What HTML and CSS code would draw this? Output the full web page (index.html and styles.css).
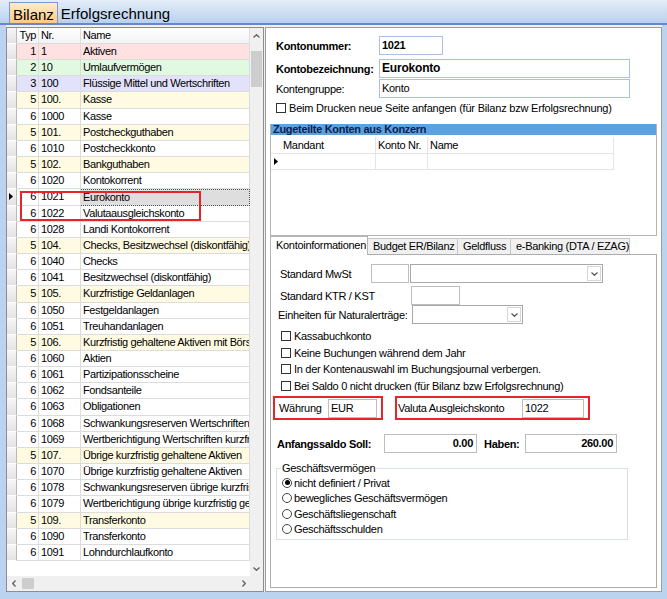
FILE: index.html
```html
<!DOCTYPE html>
<html lang="de">
<head>
	<meta charset="UTF-8">
	<title>Kontenplan</title>
	<link rel="stylesheet" href="styles.css">
</head>
<body>
	<div class="topbar">
		<div class="ttab on">Bilanz</div>
		<div class="ttab">Erfolgsrechnung</div>
	</div>
	<div class="main">
		<div class="list">
			<div class="list-body">
				<div class="grid">
					<div class="row ghead"><span class="rh"></span><span class="typ">Typ</span><span class="nr">Nr.</span><span class="name">Name</span></div>
					<div class="row t1"><span class="rh"></span><span class="typ">1</span><span class="nr">1</span><span class="name">Aktiven</span></div>
					<div class="row t2"><span class="rh"></span><span class="typ">2</span><span class="nr">10</span><span class="name">Umlaufvermögen</span></div>
					<div class="row t3"><span class="rh"></span><span class="typ">3</span><span class="nr">100</span><span class="name">Flüssige Mittel und Wertschriften</span></div>
					<div class="row t5"><span class="rh"></span><span class="typ">5</span><span class="nr">100.</span><span class="name">Kasse</span></div>
					<div class="row"><span class="rh"></span><span class="typ">6</span><span class="nr">1000</span><span class="name">Kasse</span></div>
					<div class="row t5"><span class="rh"></span><span class="typ">5</span><span class="nr">101.</span><span class="name">Postcheckguthaben</span></div>
					<div class="row"><span class="rh"></span><span class="typ">6</span><span class="nr">1010</span><span class="name">Postcheckkonto</span></div>
					<div class="row t5"><span class="rh"></span><span class="typ">5</span><span class="nr">102.</span><span class="name">Bankguthaben</span></div>
					<div class="row"><span class="rh"></span><span class="typ">6</span><span class="nr">1020</span><span class="name">Kontokorrent</span></div>
					<div class="row sel"><span class="rh"><svg width="4" height="7" viewBox="0 0 4 7"><path d="M0 0L4 3.5L0 7Z" fill="#000"/></svg></span><span class="typ">6</span><span class="nr">1021</span><span class="name">Eurokonto</span></div>
					<div class="row"><span class="rh"></span><span class="typ">6</span><span class="nr">1022</span><span class="name">Valutaausgleichskonto</span></div>
					<div class="row"><span class="rh"></span><span class="typ">6</span><span class="nr">1028</span><span class="name">Landi Kontokorrent</span></div>
					<div class="row t5"><span class="rh"></span><span class="typ">5</span><span class="nr">104.</span><span class="name">Checks, Besitzwechsel (diskontfähig)</span></div>
					<div class="row"><span class="rh"></span><span class="typ">6</span><span class="nr">1040</span><span class="name">Checks</span></div>
					<div class="row"><span class="rh"></span><span class="typ">6</span><span class="nr">1041</span><span class="name">Besitzwechsel (diskontfähig)</span></div>
					<div class="row t5"><span class="rh"></span><span class="typ">5</span><span class="nr">105.</span><span class="name">Kurzfristige Geldanlagen</span></div>
					<div class="row"><span class="rh"></span><span class="typ">6</span><span class="nr">1050</span><span class="name">Festgeldanlagen</span></div>
					<div class="row"><span class="rh"></span><span class="typ">6</span><span class="nr">1051</span><span class="name">Treuhandanlagen</span></div>
					<div class="row t5"><span class="rh"></span><span class="typ">5</span><span class="nr">106.</span><span class="name">Kurzfristig gehaltene Aktiven mit Börsenkurs</span></div>
					<div class="row"><span class="rh"></span><span class="typ">6</span><span class="nr">1060</span><span class="name">Aktien</span></div>
					<div class="row"><span class="rh"></span><span class="typ">6</span><span class="nr">1061</span><span class="name">Partizipationsscheine</span></div>
					<div class="row"><span class="rh"></span><span class="typ">6</span><span class="nr">1062</span><span class="name">Fondsanteile</span></div>
					<div class="row"><span class="rh"></span><span class="typ">6</span><span class="nr">1063</span><span class="name">Obligationen</span></div>
					<div class="row"><span class="rh"></span><span class="typ">6</span><span class="nr">1068</span><span class="name">Schwankungsreserven Wertschriften</span></div>
					<div class="row"><span class="rh"></span><span class="typ">6</span><span class="nr">1069</span><span class="name">Wertberichtigung Wertschriften kurzfristig</span></div>
					<div class="row t5"><span class="rh"></span><span class="typ">5</span><span class="nr">107.</span><span class="name">Übrige kurzfristig gehaltene Aktiven</span></div>
					<div class="row"><span class="rh"></span><span class="typ">6</span><span class="nr">1070</span><span class="name">Übrige kurzfristig gehaltene Aktiven</span></div>
					<div class="row"><span class="rh"></span><span class="typ">6</span><span class="nr">1078</span><span class="name">Schwankungsreserven übrige kurzfristig</span></div>
					<div class="row"><span class="rh"></span><span class="typ">6</span><span class="nr">1079</span><span class="name">Wertberichtigung übrige kurzfristig gehaltene</span></div>
					<div class="row t5"><span class="rh"></span><span class="typ">5</span><span class="nr">109.</span><span class="name">Transferkonto</span></div>
					<div class="row"><span class="rh"></span><span class="typ">6</span><span class="nr">1090</span><span class="name">Transferkonto</span></div>
					<div class="row"><span class="rh"></span><span class="typ">6</span><span class="nr">1091</span><span class="name">Lohndurchlaufkonto</span></div>
				</div>
				<div class="vscroll">
					<div class="arr"><svg width="7" height="4" viewBox="0 0 7 4"><path d="M0.5 3.5L3.5 0.7L6.5 3.5" fill="none" stroke="#606060" stroke-width="1.3"/></svg></div>
					<div class="vthumb"></div>
					<div class="fill"></div>
					<div class="arr"><svg width="7" height="4" viewBox="0 0 7 4"><path d="M0.5 0.5L3.5 3.3L6.5 0.5" fill="none" stroke="#606060" stroke-width="1.3"/></svg></div>
				</div>
			</div>
			<div class="hscroll">
				<div class="harr"><svg width="4" height="7" viewBox="0 0 4 7"><path d="M3.5 0.5L0.7 3.5L3.5 6.5" fill="none" stroke="#606060" stroke-width="1.3"/></svg></div>
				<div class="hthumb"></div>
				<div class="fill"></div>
				<div class="harr"><svg width="4" height="7" viewBox="0 0 4 7"><path d="M0.5 0.5L3.3 3.5L0.5 6.5" fill="none" stroke="#606060" stroke-width="1.3"/></svg></div>
				<div class="corner"></div>
			</div>
			<div class="mark"></div>
		</div>

		<div class="detail">
			<div class="acct">
				<div class="frow">
					<label class="lbl b">Kontonummer:</label>
					<div class="field blue b w64">1021</div>
				</div>
				<div class="frow r2">
					<label class="lbl b">Kontobezeichnung:</label>
					<div class="field blue b big w251">Eurokonto</div>
				</div>
				<div class="frow r3">
					<label class="lbl">Kontengruppe:</label>
					<div class="field blue w251">Konto</div>
				</div>
				<div class="crow top">
					<span class="chk"></span>Beim Drucken neue Seite anfangen (für Bilanz bzw Erfolgsrechnung)
				</div>
			</div>

			<div class="konzern">
				<div class="kbar">Zugeteilte Konten aus Konzern</div>
				<div class="krow khead"><span class="krh"></span><span class="k1">Mandant</span><span class="k2">Konto Nr.</span><span class="k3">Name</span></div>
				<div class="krow"><span class="krh"><svg width="4" height="7" viewBox="0 0 4 7"><path d="M0 0L4 3.5L0 7Z" fill="#000"/></svg></span><span class="k1"></span><span class="k2"></span><span class="k3"></span></div>
			</div>

			<div class="tabs">
				<div class="tab on">Kontoinformationen</div>
				<div class="tab t2">Budget ER/Bilanz</div>
				<div class="tab t3">Geldfluss</div>
				<div class="tab t4">e-Banking (DTA / EZAG)</div>
			</div>

			<div class="pane">
				<div class="prow">
					<label class="plbl">Standard MwSt</label>
					<div class="field w38"></div>
					<div class="field select w193"><span class="drop"><svg width="7" height="4" viewBox="0 0 7 4"><path d="M0.5 0.5L3.5 3.3L6.5 0.5" fill="none" stroke="#555" stroke-width="1.2"/></svg></span></div>
				</div>
				<div class="prow ktr">
					<label class="plbl wide">Standard KTR / KST</label>
					<div class="field w49"></div>
				</div>
				<div class="prow">
					<label class="plbl wide einh">Einheiten für Naturalerträge:</label>
					<div class="field select w111"><span class="drop"><svg width="7" height="4" viewBox="0 0 7 4"><path d="M0.5 0.5L3.5 3.3L6.5 0.5" fill="none" stroke="#555" stroke-width="1.2"/></svg></span></div>
				</div>
				<div class="checks">
					<div class="crow"><span class="chk"></span>Kassabuchkonto</div>
					<div class="crow"><span class="chk"></span>Keine Buchungen während dem Jahr</div>
					<div class="crow"><span class="chk"></span>In der Kontenauswahl im Buchungsjournal verbergen.</div>
					<div class="crow"><span class="chk"></span>Bei Saldo 0 nicht drucken (für Bilanz bzw Erfolgsrechnung)</div>
				</div>
				<div class="redrow">
					<div class="redbox cur">
						<label class="rl1">Währung</label>
						<div class="field w49">EUR</div>
					</div>
					<div class="redbox val">
						<label class="rl2">Valuta Ausgleichskonto</label>
						<div class="field w62">1022</div>
					</div>
				</div>
				<div class="saldo">
					<label class="b sl1">Anfangssaldo Soll:</label>
					<div class="field num b w93">0.00</div>
					<label class="b sl2">Haben:</label>
					<div class="field num b w92">260.00</div>
				</div>
				<fieldset class="group">
					<legend>Geschäftsvermögen</legend>
					<div class="radio"><span class="rad on"></span>nicht definiert / Privat</div>
					<div class="radio"><span class="rad"></span>bewegliches Geschäftsvermögen</div>
					<div class="radio"><span class="rad"></span>Geschäftsliegenschaft</div>
					<div class="radio"><span class="rad"></span>Geschäftsschulden</div>
				</fieldset>
			</div>
		</div>
	</div>
</body>
</html>
```
FILE: styles.css
```css
*{
	margin: 0;
	padding: 0;
	box-sizing: border-box;
}
body{
	width: 667px;
	height: 599px;
	overflow: hidden;
	background: #bcd3ef;
	font: 11px "Liberation Sans", Arial, sans-serif;
	letter-spacing: -0.3px;
	color: #000;
}
.b{
	font-weight: bold;
}

/* Bilanz / Erfolgsrechnung */
.topbar{
	height: 25px;
	display: flex;
	align-items: flex-end;
	padding-left: 9px;
	background: linear-gradient(#e4eef9, #b8d0ee);
	border-bottom: 2px solid #6588cb;
}
.ttab{
	height: 21px;
	padding: 3px 3px 0;
	font-size: 15px;
	line-height: 17px;
	letter-spacing: 0;
}
.ttab.on{
	background: linear-gradient(#fdebc9, #f8cb84);
	border: 1px solid #7b98d4;
	border-bottom: 0;
}

.main{
	display: flex;
	gap: 1px;
	height: 567px;
	margin: 0 5px 0 6px;
	padding-top: 2px;
	background: #f0f0f0;
}

/* Kontenliste links */
.list{
	position: relative;
	width: 258px;
	display: flex;
	flex-direction: column;
	background: #fff;
	border: 1px solid #8d8d8d;
}
.list-body{
	flex: 1;
	display: flex;
	min-height: 0;
}
.grid{
	flex: 1;
	overflow: hidden;
	letter-spacing: -0.38px;
}
.row{
	display: flex;
	height: 16.17px;
	line-height: 15px;
}
.row.ghead{
	height: 16px;
	background: linear-gradient(#fff, #f1f2f4);
}
.row span{
	white-space: nowrap;
	overflow: hidden;
	border-right: 1px solid #dcdcdc;
	border-bottom: 1px solid #dcdcdc;
}
.row .rh{
	width: 10px;
	display: flex;
	align-items: center;
	padding-left: 2px;
	background: linear-gradient(#f6f6f6, #e3e3e3);
	border-right-color: #b8b8b8;
	border-bottom-color: #fff;
}
.typ{
	width: 22px;
	text-align: right;
	padding-right: 2px;
}
.nr{
	width: 42px;
	padding-left: 2px;
}
.name{
	width: 169px;
	padding-left: 2px;
}
.t1{ background: #ffe1e1; }
.t2{ background: #e1f9e1; }
.t3{ background: #e2e2fa; }
.t5{ background: #fffbe2; }
.row.sel .name{
	background: #dedede;
	border: 1px dotted #555;
	border-left: 0;
}
.vscroll{
	width: 13px;
	display: flex;
	flex-direction: column;
	background: #f0f0f0;
}
.arr{
	height: 15px;
	display: flex;
	align-items: center;
	justify-content: center;
}
.vthumb{
	height: 36px;
	margin: 8px 1px 0 1px;
	background: #cdcdcd;
}
.fill{
	flex: 1;
}
.hscroll{
	height: 15px;
	display: flex;
	align-items: center;
	background: #f0f0f0;
}
.harr{
	width: 13px;
	height: 15px;
	display: flex;
	align-items: center;
	justify-content: center;
}
.hthumb{
	width: 12px;
	height: 11px;
	margin-left: 2px;
	background: #cdcdcd;
}
.corner{
	width: 13px;
}
.mark{
	position: absolute;
	left: 13px;
	top: 163px;
	width: 181px;
	height: 30px;
	border: 2px solid #e8242b;
}

/* Detail rechts */
.detail{
	flex: 1;
	display: flex;
	flex-direction: column;
	padding: 0 4px 3px 4px;
	background: #fff;
	border: 1px solid #9d9d9d;
}
.acct{
	height: 96px;
	padding: 8px 0 0 6px;
}
.frow{
	display: flex;
	align-items: center;
	height: 19px;
}
.frow.r2{
	margin-top: 4px;
}
.frow.r3{
	margin-top: 1px;
}
.lbl{
	width: 103px;
}
.field{
	height: 19px;
	padding: 0 2px;
	line-height: 17px;
	background: #fff;
	border: 1px solid #bdbdbd;
	white-space: nowrap;
}
.field.blue{
	border-color: #a9c1e2;
}
.field.big{
	font-size: 12px;
	letter-spacing: -0.2px;
}
.w38{ width: 38px; }
.w49{ width: 49px; }
.w62{ width: 62px; }
.w64{ width: 64px; }
.w92{ width: 92px; }
.w93{ width: 93px; }
.w111{ width: 111px; }
.w193{ width: 193px; }
.w251{ width: 251px; }
.crow{
	display: flex;
	align-items: center;
	height: 16.5px;
}
.crow.top{
	height: 16px;
	margin-top: 2px;
	letter-spacing: -0.2px;
}
.chk{
	width: 10px;
	height: 10px;
	margin-right: 3px;
	background: #fff;
	border: 1px solid #333;
}

.konzern{
	height: 112px;
	border: 1px solid #b4b4b4;
	border-top: 0;
}
.kbar{
	height: 11px;
	padding-left: 2px;
	line-height: 11px;
	font-weight: bold;
	color: #10204e;
	background: #5ca2df;
}
.krow{
	display: flex;
	height: 16px;
	line-height: 15px;
}
.khead{
	height: 17px;
	margin-top: 2px;
	line-height: 16px;
}
.krow span{
	display: flex;
	align-items: center;
	padding-left: 2px;
	border-right: 1px solid #e4e4e4;
	border-bottom: 1px solid #e4e4e4;
}
.krow .krh{
	width: 10px;
	padding-left: 3px;
	border-right: 0;
}
.k1{ width: 95px; }
.k2{ width: 52px; }
.k3{ width: 186px; }

.tabs{
	height: 18px;
	display: flex;
	align-items: flex-end;
	position: relative;
	z-index: 1;
}
.tab{
	height: 16px;
	padding-left: 5px;
	line-height: 15px;
	background: #f0f0f0;
	border: 1px solid #c8c8c8;
	border-left: 0;
	border-bottom: 0;
}
.tab.on{
	width: 98px;
	height: 19px;
	margin-bottom: -1px;
	padding-left: 5px;
	line-height: 17px;
	background: #fff;
	border-left: 1px solid #c8c8c8;
	border-color: #b5b5b5;
}
.tab.t2{ width: 90px; }
.tab.t3{ width: 53px; }
.tab.t4{ width: 119px; }

.pane{
	flex: 1;
	padding-top: 9px;
	border: 1px solid #adadad;
}
.prow{
	display: flex;
	align-items: center;
	height: 19px;
	padding-left: 9px;
}
.prow.ktr{
	margin-top: 3px;
}
.plbl{
	width: 91px;
}
.plbl.wide{
	width: 131px;
}
.plbl.einh{
	margin-left: -2px;
	width: 133px;
}
.field.select{
	display: flex;
	justify-content: flex-end;
	margin-left: 1px;
	padding: 1px;
	border-color: #a8a8a8;
}
.drop{
	width: 14px;
	display: flex;
	align-items: center;
	justify-content: center;
	border: 1px solid #d6d6d6;
}
.checks{
	margin-top: 4px;
	padding-left: 10px;
}
.redrow{
	display: flex;
	gap: 12px;
	margin: 2px 0 0 2px;
}
.redbox{
	height: 24px;
	display: flex;
	align-items: center;
	border: 2px solid #e3262c;
}
.redbox.cur{
	width: 110px;
	padding-left: 4px;
}
.redbox.val{
	width: 195px;
	padding-left: 1px;
}
.rl1{
	width: 49px;
}
.rl2{
	width: 124px;
}
.saldo{
	display: flex;
	align-items: center;
	height: 19px;
	margin-top: 14px;
	padding-left: 6px;
}
.sl1{
	width: 107px;
}
.sl2{
	width: 41px;
	margin-left: 7px;
}
.field.num{
	text-align: right;
	padding-right: 3px;
}
.group{
	width: 352px;
	margin: 9px 0 0 5px;
	padding: 0 0 2px 4px;
	border: 1px solid #d9e0e6;
}
.group legend{
	padding: 0 1px;
	line-height: 13px;
}
.radio{
	display: flex;
	align-items: center;
	height: 15.5px;
}
.rad{
	width: 10px;
	height: 10px;
	margin: 0 2px 0 1px;
	display: flex;
	align-items: center;
	justify-content: center;
	background: #fff;
	border: 1px solid #444;
	border-radius: 50%;
}
.rad.on::after{
	content: "";
	width: 5px;
	height: 5px;
	background: #000;
	border-radius: 50%;
}
```
